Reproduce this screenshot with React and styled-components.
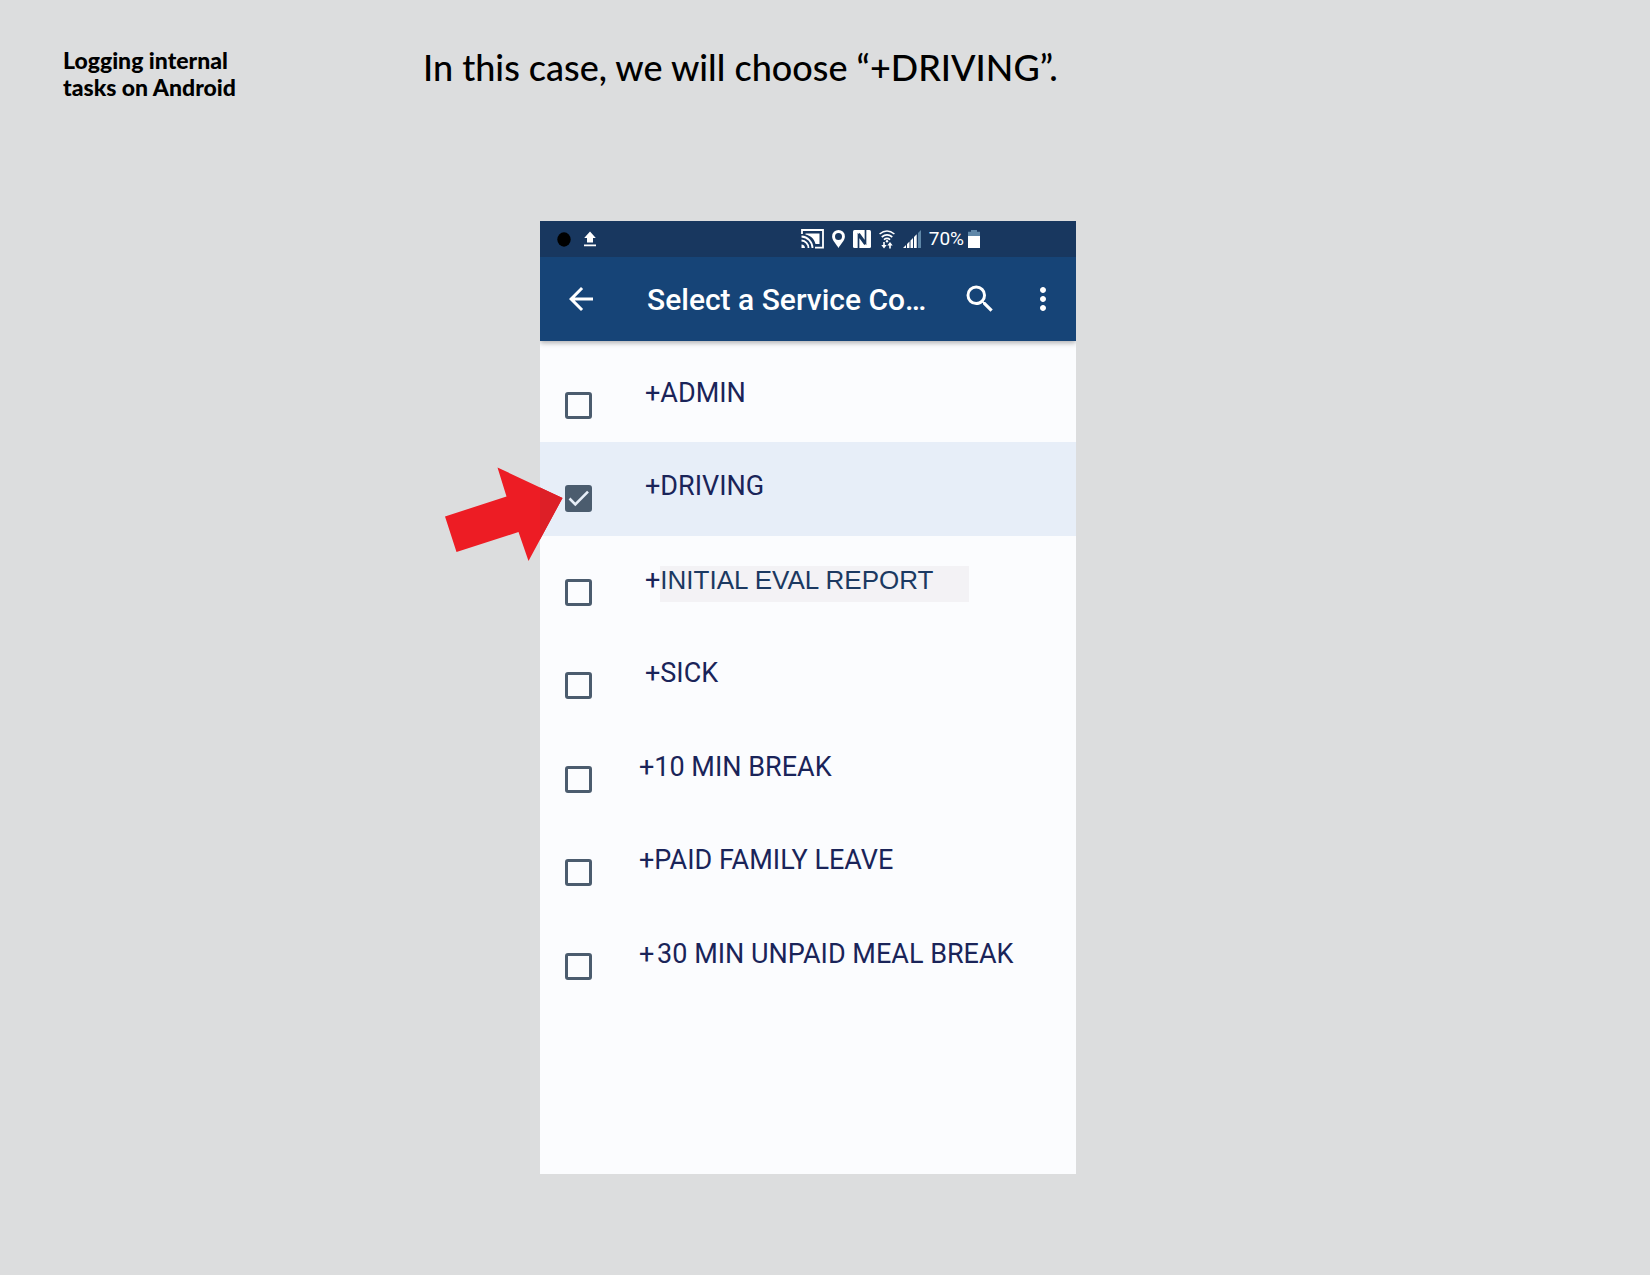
import React, { useState } from "react";
import styled, { createGlobalStyle } from "styled-components";

const GlobalStyle = createGlobalStyle`
  * { box-sizing: border-box; }
  body {
    margin: 0;
    background: #dcddde;
    color: #000;
    font-family: Roboto, "Liberation Sans", sans-serif;
  }
`;

const Slide = styled.main`
  display: grid;
  grid-template-columns: 360px minmax(0, 1fr);
  row-gap: 120px;
  min-height: 100vh;
  padding: 47px 63px 100px;
  align-content: start;
`;

const Topic = styled.h1`
  margin: 0;
  font-family: Lato, "Open Sans", sans-serif;
  font-size: 23px;
  font-weight: 900;
  line-height: 27px;
`;

const Instruction = styled.p`
  margin: 0;
  font-family: Lato, "Open Sans", sans-serif;
  font-size: 36px;
  font-weight: 500;
  line-height: 40px;
`;

const Phone = styled.section`
  grid-column: 2;
  width: 100%;
  max-width: 536px;
  min-height: 953px;
  margin-left: 117px;
  background: #fbfcfe;
`;

const StatusBar = styled.div`
  display: flex;
  align-items: center;
  height: 36px;
  padding: 0 96px 0 17px;
  background: #18375f;
  color: #fff;
`;

const StatusGroup = styled.div`
  display: flex;
  align-items: center;
  gap: ${(p) => p.$gap}px;
  margin-left: ${(p) => (p.$end ? "auto" : "0")};
`;

const Battery = styled.span`
  font-size: 19px;
  line-height: 24px;
`;

const AppBar = styled.header`
  position: relative;
  display: flex;
  align-items: center;
  height: 84px;
  padding: 0 15px 0 23px;
  background: #164477;
  color: #fff;
  box-shadow: 0 2px 5px rgba(0, 0, 0, 0.3);
  clip-path: inset(0 0 -8px 0);
`;

const IconButton = styled.button`
  display: grid;
  flex: none;
  width: 36px;
  height: 36px;
  padding: 0;
  border: 0;
  background: none;
  color: inherit;
  cursor: pointer;
`;

const Title = styled.h2`
  flex: 1;
  margin: 0 0 0 48px;
  padding-top: 2px;
  font-size: 30px;
  font-weight: 500;
  line-height: 36px;
  white-space: nowrap;
`;

const Actions = styled.div`
  display: flex;
  gap: 27px;
`;

const Codes = styled.ul`
  display: grid;
  grid-auto-rows: 1fr;
  min-height: 662px;
  margin: 0;
  padding: 8px 0 0;
  list-style: none;
`;

const Row = styled.li`
  position: relative;
  background: ${(p) => (p.$selected ? "#e7eef8" : "transparent")};
`;

const RowLabel = styled.label`
  display: grid;
  grid-template-columns: 27px 1fr;
  column-gap: ${(p) => (p.$wide ? 53 : 47)}px;
  align-items: start;
  height: 100%;
  padding: 26px 0 0 25px;
  cursor: pointer;
`;

const Tick = styled.span`
  display: grid;
  width: 27px;
  height: 27px;
  margin-top: 17px;

  > * { grid-area: 1 / 1; }
  > svg { pointer-events: none; }
`;

const Box = styled.input`
  appearance: none;
  width: 27px;
  height: 27px;
  margin: 0;
  border: 3px solid #4b5c6e;
  border-radius: 3px;
  cursor: pointer;

  &:checked { background: #4b5c6e; }
`;

const Name = styled.span`
  display: flex;
  align-items: baseline;
  color: #1a2459;
  font-size: 27px;
  line-height: 36px;
  white-space: pre;
`;

const Patch = styled.span`
  padding-right: 36px;
  background: linear-gradient(#f3f2f5, #f3f2f5) 0 4px no-repeat;
  padding-bottom: 4px;
  color: #1b3961;
  font-family: "Liberation Sans", Arial, sans-serif;
  font-size: 26px;
`;

const Pointer = styled.svg`
  position: absolute;
  left: -96px;
  top: 24px;
  pointer-events: none;
`;

const CODES = [
  { name: "ADMIN", wide: true },
  { name: "DRIVING", wide: true },
  { name: "INITIAL EVAL REPORT", wide: true, patched: true },
  { name: "SICK", wide: true },
  { name: "10 MIN BREAK" },
  { name: "PAID FAMILY LEAVE" },
  { name: "\u200a30 MIN UNPAID MEAL BREAK" },
];

const MaterialIcon = ({ d }) => (
  <svg width="36" height="36" viewBox="0 0 24 24" fill="currentColor" aria-hidden="true">
    <path d={d} />
  </svg>
);

const RecordDot = () => (
  <svg width="14" height="15" viewBox="0 0 14 15" aria-hidden="true">
    <ellipse cx="7" cy="7.5" rx="6.7" ry="7.2" fill="#000" />
  </svg>
);

const UploadIcon = () => (
  <svg width="12" height="16" viewBox="0 0 12 16" fill="#fff" aria-hidden="true">
    <path d="M6 0.5L11.8 7H9v4.5H3V7H0.2zM0 13.5h12v1.8H0z" />
  </svg>
);

const CastIcon = () => (
  <svg width="23" height="20" viewBox="0 0 23 20" fill="none" stroke="#fff" strokeWidth="1.8" aria-hidden="true">
    <path d="M1 5V1h21v17.6h-8" />
    <path d="M4.5 4.5h14v10.5h-4C13 9.500 9.500 6.500 4.500 5.500z" fill="#fff" stroke="none" />
    <path d="M0.500 7.500A11.500 11.500 0 0 1 11.500 19M0.500 11.500A7.500 7.500 0 0 1 7.500 19" />
    <path d="M0.500 15.500A4 4 0 0 1 4 19H0.500z" fill="#fff" stroke="none" />
  </svg>
);

const PinIcon = () => (
  <svg width="13" height="18" viewBox="0 0 13 18" fill="#fff" aria-hidden="true">
    <path fillRule="evenodd" d="M6.500 0A6.400 6.400 0 0 0 0.100 6.400C0.100 10.500 4.500 14 6.500 18C8.500 14 12.900 10.500 12.900 6.400A6.400 6.400 0 0 0 6.500 0zM6.500 3a3.500 3.500 0 1 1 0 7a3.500 3.500 0 1 1 0-7z" />
  </svg>
);

const NfcIcon = () => (
  <svg width="18" height="18" viewBox="0 0 18 18" aria-hidden="true">
    <rect width="18" height="18" rx="1.500" fill="#fff" />
    <path d="M5.500 18V5.500L12 14.500M12.500 0v12.500L6 3.500" fill="none" stroke="#18375f" strokeWidth="1.700" />
  </svg>
);

const WifiIcon = () => (
  <svg width="16" height="19" viewBox="0 0 16 19" fill="none" stroke="#fff" strokeWidth="1.600" aria-hidden="true">
    <path d="M0.600 4Q8-2 15.400 4M2.700 7Q8 2.800 13.300 7M4.900 9.600Q8 7.200 11.100 9.600" />
    <circle cx="8" cy="11.300" r="1.200" fill="#fff" stroke="none" />
    <path d="M2.300 15h5.400L5 18.500zM8.300 15.500h5.400L11 12z" fill="#fff" stroke="none" />
    <path d="M5 12v4M11 14v4.500" />
  </svg>
);

const SignalIcon = () => (
  <svg width="18" height="18" viewBox="0 0 18 18" fill="#fff" aria-hidden="true">
    <path d="M0 18L3 15v3zM4 14l2.500-2.500V18H4zM7.500 10.500L10 8v10H7.500zM11 7l2.700-2.700V18H11z" />
    <path d="M15 3l3-3v18h-3z" fill="#5f87a8" />
  </svg>
);

const BatteryIcon = () => (
  <svg width="12" height="18" viewBox="0 0 12 18" aria-hidden="true">
    <path d="M3 0h6v1.800h3V6.500H0V1.800h3z" fill="#5f87a8" />
    <path d="M0 6h12v12H0z" fill="#fff" />
  </svg>
);

const Check = () => (
  <svg width="27" height="27" viewBox="0 0 27 27" fill="none" stroke="#e7eef8" strokeWidth="2.600" aria-hidden="true">
    <path d="M4.500 13.500L10.300 19.300L23 6.600" />
  </svg>
);

const RedArrow = () => (
  <Pointer width="120" height="96" viewBox="0 0 120 96" aria-hidden="true">
    <path d="M1 50.500L62.500 30.500L53.500 1.500L118.500 32L84.500 95L74.500 66L12.500 86z" fill="#ed1c24" />
    <path d="M96 21.500L118.500 32L96 73.600z" fill="#dd1f27" />
  </Pointer>
);

export default function App() {
  const [chosen, setChosen] = useState("DRIVING");

  return (
    <>
      <GlobalStyle />
      <Slide>
        <Topic>
          Logging internal
          <br />
          tasks on Android
        </Topic>
        <Instruction>In this case, we will choose “+DRIVING”.</Instruction>
        <Phone>
          <StatusBar>
            <StatusGroup $gap={13}>
              <RecordDot />
              <UploadIcon />
            </StatusGroup>
            <StatusGroup $gap={8} $end>
              <CastIcon />
              <PinIcon />
              <NfcIcon />
              <WifiIcon />
              <SignalIcon />
              <StatusGroup $gap={4}>
                <Battery>70%</Battery>
                <BatteryIcon />
              </StatusGroup>
            </StatusGroup>
          </StatusBar>
          <AppBar>
            <IconButton type="button" aria-label="Back">
              <MaterialIcon d="M20 11H7.830l5.590-5.590L12 4l-8 8 8 8 1.410-1.410L7.830 13H20v-2z" />
            </IconButton>
            <Title>Select a Service Co…</Title>
            <Actions>
              <IconButton type="button" aria-label="Search">
                <MaterialIcon d="M15.500 14h-.79l-.28-.27A6.471 6.471 0 0 0 16 9.500 6.500 6.500 0 1 0 9.500 16c1.610 0 3.090-.59 4.230-1.570l.27.28v.79l5 4.990L20.490 19l-4.990-5zm-6 0C7.010 14 5 11.990 5 9.500S7.010 5 9.500 5 14 7.010 14 9.500 11.990 14 9.500 14z" />
              </IconButton>
              <IconButton type="button" aria-label="More options">
                <MaterialIcon d="M12 8c1.100 0 2-.9 2-2s-.9-2-2-2-2 .9-2 2 .9 2 2 2zm0 2c-1.100 0-2 .9-2 2s.9 2 2 2 2-.9 2-2-.9-2-2-2zm0 6c-1.100 0-2 .9-2 2s.9 2 2 2 2-.9 2-2-.9-2-2-2z" />
              </IconButton>
            </Actions>
          </AppBar>
          <Codes>
            {CODES.map(({ name, wide, patched }) => {
              const selected = name === chosen;
              return (
                <Row key={name} $selected={selected}>
                  <RowLabel $wide={wide}>
                    <Tick>
                      <Box
                        type="checkbox"
                        checked={selected}
                        onChange={() => setChosen(selected ? "" : name)}
                      />
                      {selected && <Check />}
                    </Tick>
                    <Name>+{patched ? <Patch>{name}</Patch> : name}</Name>
                  </RowLabel>
                  {name === "DRIVING" && <RedArrow />}
                </Row>
              );
            })}
          </Codes>
        </Phone>
      </Slide>
    </>
  );
}
